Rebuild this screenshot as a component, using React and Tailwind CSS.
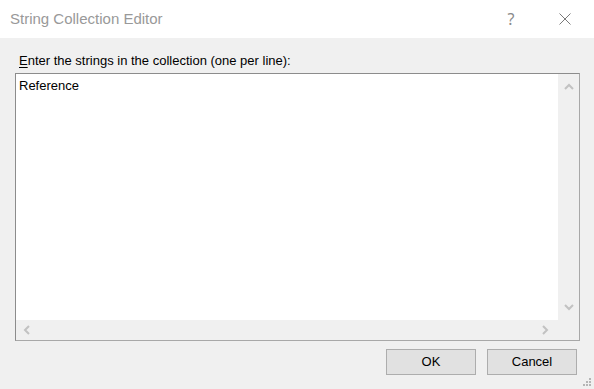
import React from "react";

// little chevron used on the scrollbar arrows
const Chevron = ({ dir }) => {
  const paths = {
    up: "M1 6 L5 2 L9 6",
    down: "M1 2 L5 6 L9 2",
    left: "M6 1 L2 5 L6 9",
    right: "M2 1 L6 5 L2 9",
  };
  const vertical = dir === "up" || dir === "down";
  return (
    <svg width={vertical ? 10 : 8} height={vertical ? 8 : 10} viewBox={vertical ? "0 0 10 8" : "0 0 8 10"}>
      <path d={paths[dir]} fill="none" stroke="#c2c2c2" strokeWidth="2" />
    </svg>
  );
};

const Button = ({ children }) => (
  <button className="w-[90px] h-[26px] bg-[#e1e1e1] border border-[#adadad] text-[13px] text-black flex items-center justify-center">
    {children}
  </button>
);

export default function App() {
  return (
    <div
      className="w-[594px] h-[389px] flex flex-col bg-white overflow-hidden"
      style={{ fontFamily: '"Liberation Sans", Arial, sans-serif' }}
    >
      {/* Title bar */}
      <div className="h-[38px] flex items-center bg-white">
        <span className="pl-[10px] text-[15px] text-[#999999] flex-1">
          String Collection Editor
        </span>
        <span
          className="w-[20px] text-center text-[16px] text-[#8a8a8a] mr-[38px]"
          style={{ fontFamily: '"Noto Sans", sans-serif' }}
        >
          ?
        </span>
        <svg width="12" height="12" viewBox="0 0 12 12" className="mr-[23px]">
          <path d="M0.5 0.5 L11.5 11.5 M11.5 0.5 L0.5 11.5" stroke="#7a7a7a" strokeWidth="1" />
        </svg>
      </div>

      {/* Body */}
      <div className="flex-1 bg-[#f0f0f0] flex flex-col pl-[15px] pr-[14px] pt-[15px] relative">
        <div className="text-[13px] text-black leading-[15px] pl-[4px]">
          <span className="underline underline-offset-2">E</span>nter the strings in the collection (one per line):
        </div>

        {/* Text box */}
        <div className="mt-[5px] h-[268px] border border-[#8c8c8c] border-b-[#a8a8a8] border-r-[#a8a8a8] flex flex-col bg-white">
          <div className="flex-1 flex">
            <div className="flex-1 text-[13px] text-black pl-[3px] pt-[4px] leading-[15px]">Reference</div>
            <div className="w-[21px] bg-[#f0f0f0] flex flex-col items-center justify-between py-[9px]">
              <Chevron dir="up" />
              <Chevron dir="down" />
            </div>
          </div>
          <div className="h-[20px] flex">
            <div className="flex-1 bg-[#f0f0f0] flex items-center justify-between pl-[7px] pr-[9px]">
              <Chevron dir="left" />
              <Chevron dir="right" />
            </div>
            <div className="w-[21px] bg-[#f0f0f0]" />
          </div>
        </div>

        {/* Buttons */}
        <div className="flex justify-end gap-[11px] mt-[8px] pr-[3px]">
          <Button>OK</Button>
          <Button>Cancel</Button>
        </div>

        {/* resize grip */}
        <svg width="10" height="10" viewBox="0 0 10 10" className="absolute right-[2px] bottom-[2px]">
          {[[8, 2], [8, 5], [8, 8], [5, 5], [5, 8], [2, 8]].map(([x, y], i) => (
            <rect key={i} x={x - 1} y={y - 1} width="2" height="2" fill="#b5b5b5" />
          ))}
        </svg>
      </div>
    </div>
  );
}
